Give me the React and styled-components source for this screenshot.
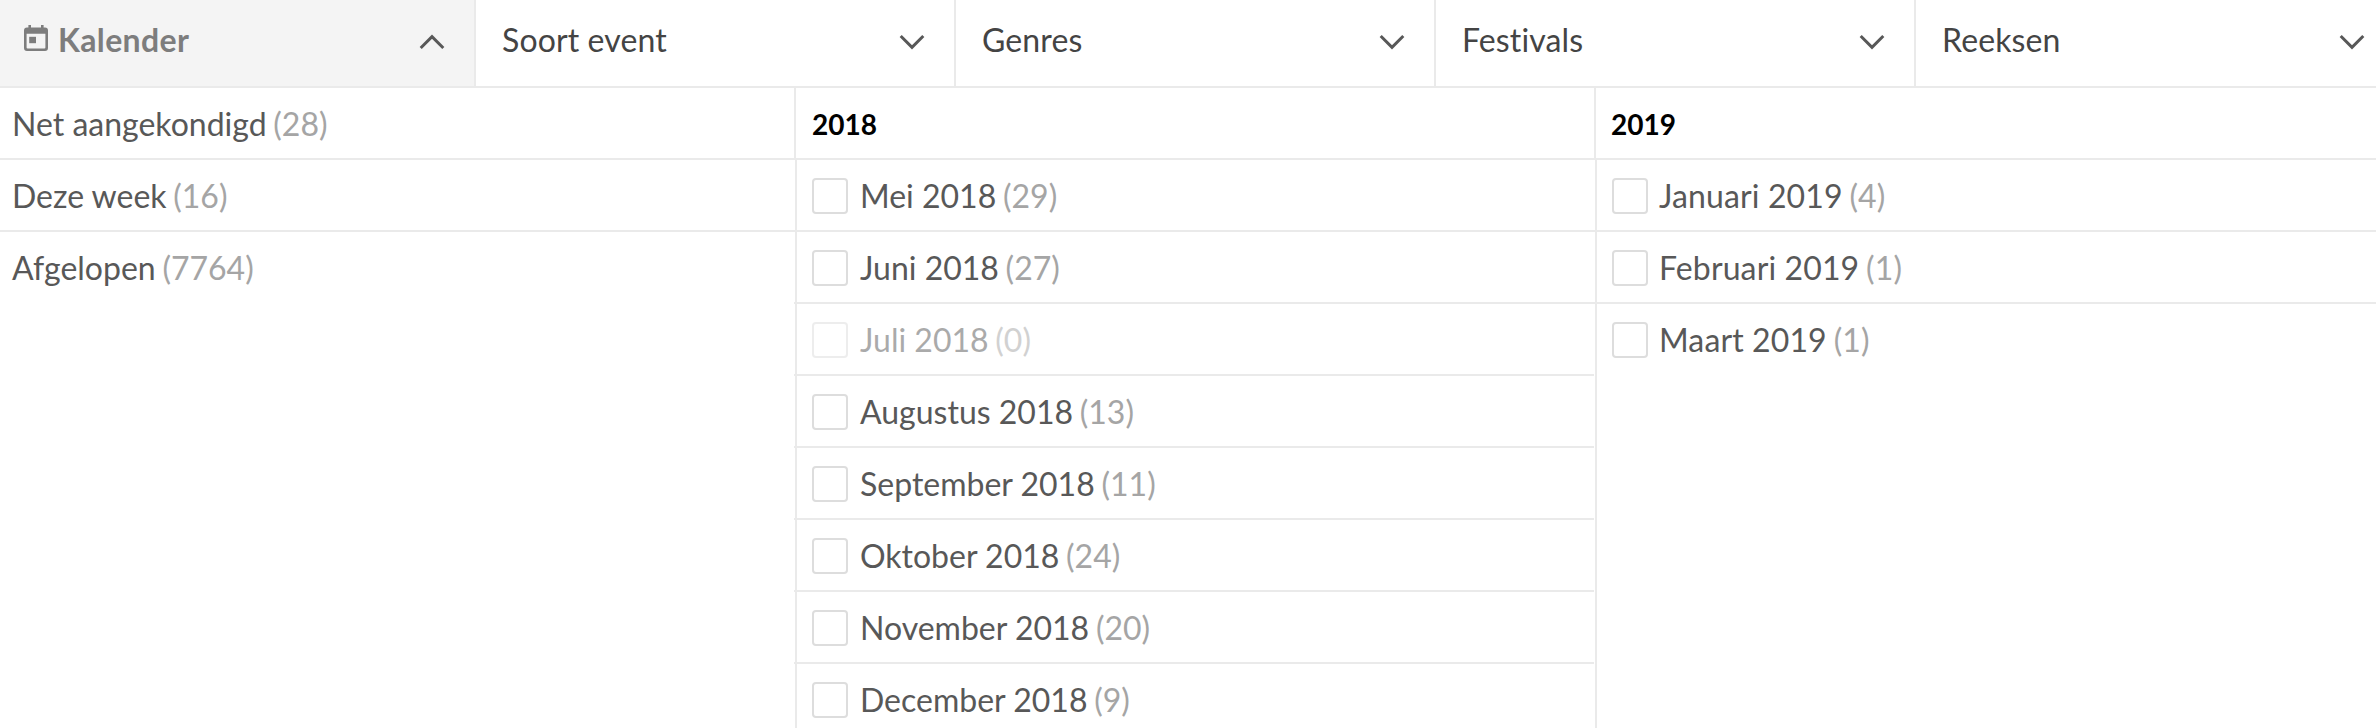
import React from 'react';
import styled, { createGlobalStyle } from 'styled-components';

const Global = createGlobalStyle`
  * { box-sizing: border-box; }
  body {
    margin: 0;
    background: #fff;
    overflow: hidden;
    font-family: Lato, "Liberation Sans", sans-serif;
    font-size: 32px;
    font-variant-ligatures: none;
    color: #585858;
  }
`;

const Page = styled.div`
  height: 728px;
  overflow: hidden;
  display: flex;
  flex-direction: column;
`;

const TabBar = styled.nav`
  display: flex;
  flex: none;
  height: 88px;
  margin-left: -4px;
  border-bottom: 2px solid #eaeaea;
`;

const Tab = styled.div`
  display: flex;
  flex: none;
  align-items: center;
  width: 480px;
  padding: 0 29px 2px 26px;
  border-right: 2px solid #eaeaea;
  background: ${(p) => (p.$active ? '#f4f4f4' : '#fff')};
  color: ${(p) => (p.$active ? '#7d7d7d' : '#444')};
  font-weight: ${(p) => (p.$active ? 700 : 400)};
  letter-spacing: ${(p) => (p.$active ? 0.35 : 0.12)}px;
`;

const TabLabel = styled.span`
  flex: 1;
  padding-bottom: 4px;
  line-height: 40px;
`;

const CalendarIcon = styled.svg`
  flex: none;
  width: 24px;
  height: 26px;
  margin: 0 10px 8px 2px;
  fill: #7d7d7d;
`;

const Chevron = styled.svg`
  flex: none;
  width: 26px;
  height: 16px;
  fill: none;
  stroke: #585858;
  stroke-width: 3;
  transform: ${(p) => (p.$up ? 'rotate(180deg)' : 'none')};
`;

const Columns = styled.div`
  display: grid;
  grid-template-columns: 794px 800px 1fr;
  flex: 1;
`;

const Column = styled.section`
  display: flex;
  flex-direction: column;
`;

const Row = styled.div`
  display: flex;
  flex: none;
  align-items: center;
  height: 72px;
  border-bottom: ${(p) => (p.$last ? 0 : 2)}px solid #eaeaea;
`;

const PeriodRow = styled(Row)`
  padding: ${(p) => (p.$last ? 0 : 2)}px 12px 0;
`;

const MonthRow = styled(Row)`
  padding-left: 1px;
`;

const Cell = styled.div`
  display: flex;
  flex: 1;
  align-self: stretch;
  align-items: center;
  border-left: 2px solid #eaeaea;
  padding: ${(p) => (p.$last ? 0 : 2)}px 0 0 15px;
`;

const Year = styled.h2`
  margin: 0 0 0 ${(p) => (p.$tight ? 0 : 1)}px;
  font-size: 28px;
  line-height: 34px;
  font-weight: 700;
  color: #000;
`;

const Option = styled.label`
  display: flex;
  align-items: center;
  opacity: ${(p) => (p.$disabled ? 0.5 : 1)};
`;

const Box = styled.span`
  width: 36px;
  height: 36px;
  margin-right: ${(p) => (p.$tight ? 11 : 12)}px;
  border: 2px solid #ddd;
  border-radius: 4px;
`;

const Label = styled.span`
  line-height: 40px;
  white-space: pre;
  letter-spacing: ${(p) => (p.$tight ? 0.12 : 0)}px;
`;

const Count = styled.span`
  margin-left: -1.5px;
  color: #a5a5a5;
`;

const Filler = styled.div`
  flex: 1;
  margin-left: 1px;
  border-left: 2px solid #eaeaea;
`;

const tabs = ['Kalender', 'Soort event', 'Genres', 'Festivals', 'Reeksen'];

const periods = [
  ['Net aangekondigd', 28],
  ['Deze week', 16],
  ['Afgelopen', 7764],
];

const years = [
  {
    year: 2018,
    months: [
      ['Mei', 29], ['Juni', 27], ['Juli', 0], ['Augustus', 13],
      ['September', 11], ['Oktober', 24], ['November', 20], ['December', 9],
    ],
  },
  { year: 2019, tight: true, months: [['Januari', 4], ['Februari', 1], ['Maart', 1]] },
];

export default function App() {
  return (
    <Page>
      <Global />
      <TabBar>
        {tabs.map((name, i) => (
          <Tab key={name} $active={i === 0}>
            {i === 0 && (
              <CalendarIcon viewBox="0 0 24 26">
                <path
                  fillRule="evenodd"
                  d="M4.400 0H7v2.600h10V0h2.600v2.600H21a3 3 0 0 1 3 3V23a3 3 0 0 1-3 3H3a3 3 0 0 1-3-3V5.600a3 3 0 0 1 3-3h1.400zM2.600 8.700V22.600a1 1 0 0 0 1 1h16.800a1 1 0 0 0 1-1V8.700z"
                />
                <path d="M5.200 11.800h6.800v6.400H5.200z" />
              </CalendarIcon>
            )}
            <TabLabel>{name}</TabLabel>
            <Chevron viewBox="0 0 26 16" $up={i === 0}>
              <path d="M1.700 2 13 13.300 24.300 2" />
            </Chevron>
          </Tab>
        ))}
      </TabBar>
      <Columns>
        <Column>
          {periods.map(([name, count], i) => (
            <PeriodRow key={name} $last={i === periods.length - 1}>
              <Label>{name} <Count>({count})</Count></Label>
            </PeriodRow>
          ))}
        </Column>
        {years.map(({ year, tight, months }) => (
          <Column key={year}>
            <Row>
              <Cell><Year $tight={tight}>{year}</Year></Cell>
            </Row>
            {months.map(([name, count], i) => {
              const last = i === months.length - 1;
              return (
                <MonthRow key={name} $last={last}>
                  <Cell $last={last}>
                    <Option $disabled={count === 0}>
                      <Box $tight={tight} />
                      <Label $tight={tight}>{name} {year} <Count>({count})</Count></Label>
                    </Option>
                  </Cell>
                </MonthRow>
              );
            })}
            <Filler />
          </Column>
        ))}
      </Columns>
    </Page>
  );
}
